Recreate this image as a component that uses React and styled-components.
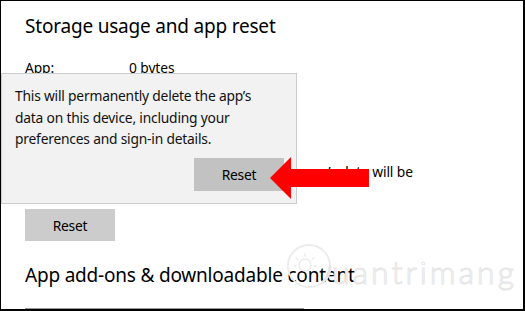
import React from "react";
import styled, { createGlobalStyle } from "styled-components";

const Global = createGlobalStyle`
  html, body { margin: 0; padding: 0; background: #fff; }
  body { font-family: "Noto Sans", "Open Sans", sans-serif; color: #000; }
  * { box-sizing: border-box; }
`;

const Frame = styled.div`
  position: relative;
  width: 525px;
  height: 311px;
  overflow: hidden;
  border-style: solid;
  border-color: #000;
  border-width: 1px 2px 2px 1px;
  background: #fff;
`;

const Page = styled.div`
  display: flex;
  flex-direction: column;
  padding: 11px 0 0 24px;
`;

const Heading = styled.h2`
  margin: 0;
  font-size: 19px;
  font-weight: 400;
  line-height: 28px;
  letter-spacing: -0.2px;
  white-space: nowrap;
`;

const Body = styled.div`
  font-size: 13.8px;
  line-height: 20px;
  letter-spacing: -0.1px;
  white-space: nowrap;
`;

const InfoRow = styled(Body)`
  display: flex;
  margin-top: 18px;
`;

const Label = styled.span`
  width: 104px;
`;

const Desc = styled(Body)`
  margin-top: 84px;
  padding-left: 279px;
`;

const Button = styled.button`
  width: ${(p) => p.$w}px;
  height: ${(p) => p.$h}px;
  border: none;
  background: ${(p) => p.$bg};
  font-family: inherit;
  font-size: 13.8px;
  letter-spacing: -0.2px;
  color: #000;
  padding: 0;
  cursor: pointer;
`;

const PageReset = styled(Button)`
  margin-top: 27px;
`;

const SecondHeading = styled(Heading)`
  margin-top: 20px;
`;

const InputBox = styled.div`
  margin-top: 19px;
  width: 279px;
  height: 30px;
  border: 2px solid #999;
`;

const Popup = styled.div`
  position: absolute;
  left: 0;
  top: 72px;
  width: 296px;
  height: 131px;
  background: #f2f2f2;
  border: 1px solid #cccccc;
  padding: 11px 12px 0 13px;
  display: flex;
  flex-direction: column;
`;

const PopupText = styled.p`
  margin: 0;
  max-width: 262px;
  font-size: 13.8px;
  letter-spacing: -0.2px;
  line-height: 21.5px;
  color: #111;
`;

const PopupActions = styled.div`
  display: flex;
  justify-content: flex-end;
  margin-top: 8px;
`;

const Arrow = styled.svg`
  position: absolute;
  left: 269px;
  top: 155px;
`;

const Watermark = styled.div`
  position: absolute;
  left: 283px;
  top: 240px;
  display: flex;
  align-items: center;
  pointer-events: none;
`;

const WmText = styled.span`
  font-family: "Lato", sans-serif;
  font-size: 32px;
  font-weight: 300;
  letter-spacing: 3px;
  color: #fff;
  -webkit-text-stroke: 1px #e6e6e6;
  margin-left: -2px;
  margin-top: 10px;
`;

export default function App() {
  return (
    <>
      <Global />
      <Frame>
        <Page>
          <Heading>Storage usage and app reset</Heading>
          <InfoRow>
            <Label>App:</Label>
            <span>0 bytes</span>
          </InfoRow>
          <Desc>app’s data will be</Desc>
          <PageReset $w={90} $h={32} $bg="#cccccc">Reset</PageReset>
          <SecondHeading>App add-ons &amp; downloadable content</SecondHeading>
          <InputBox />
        </Page>

        <Watermark>
          <svg width="50" height="50" viewBox="0 0 50 50">
            <circle cx="25" cy="25" r="21" fill="none" stroke="#ececec" strokeWidth="2" />
            <path d="M46 25 A21 21 0 0 1 38 42" fill="none" stroke="#e6e6e6" strokeWidth="3" />
            <circle cx="21" cy="24" r="6" fill="none" stroke="#ececec" strokeWidth="1.5" />
            <g stroke="#ececec" strokeWidth="1.5" strokeLinecap="round">
              <line x1="21" y1="13" x2="21" y2="15" />
              <line x1="12" y1="17" x2="14" y2="18.5" />
              <line x1="30" y1="17" x2="28" y2="18.5" />
              <line x1="10" y1="25" x2="12" y2="25" />
              <line x1="30" y1="25" x2="32" y2="25" />
            </g>
          </svg>
          <WmText>uantrimang</WmText>
        </Watermark>

        <Popup>
          <PopupText>
            This will permanently delete the app’s data on this device, including your
            preferences and sign-in details.
          </PopupText>
          <PopupActions>
            <Button $w={90} $h={33} $bg="#c2c2c2">Reset</Button>
          </PopupActions>
        </Popup>

        <Arrow width="100" height="44" viewBox="0 0 100 44">
          <polygon points="0,22 21,1 21,13 99,13 99,31 21,31 21,43" fill="#ff0000" />
        </Arrow>
      </Frame>
    </>
  );
}
